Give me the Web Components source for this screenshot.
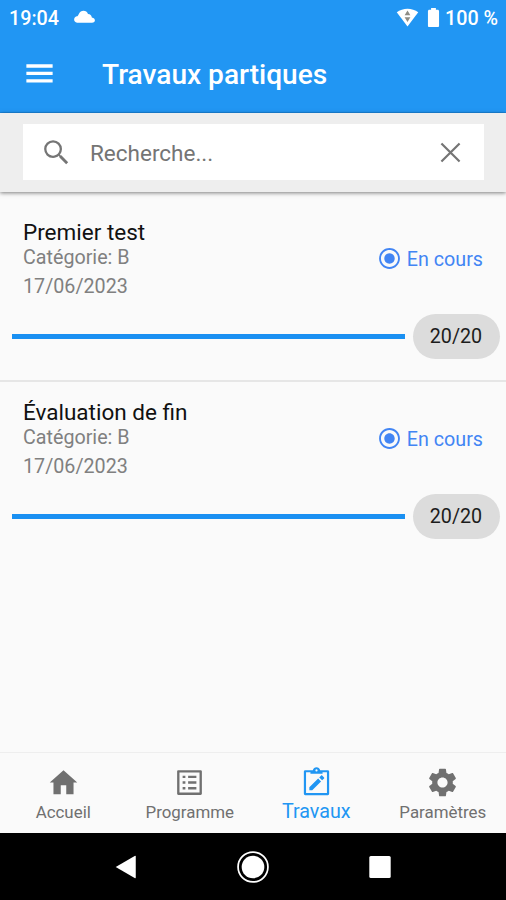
<!DOCTYPE html>
<html lang="fr">
<head>
<meta charset="utf-8">
<meta name="viewport" content="width=device-width, initial-scale=1">
<title>Travaux partiques</title>
<style>
    html, body {
        margin: 0;
        height: 100%;
        overflow: hidden;
        background: #fafafa;
        font-family: Roboto, "Liberation Sans", sans-serif;
    }
</style>
</head>
<body>
<travaux-app></travaux-app>

<script>
const ICONS = {
    menu: '<path d="M3 18.200h18v-2.300H3zM3 13.100h18v-2.300H3zM3 5.700v2.300h18V5.700z"/>',
    search: '<path d="M15.5 14h-.79l-.28-.27A6.471 6.471 0 0 0 16 9.5 6.5 6.5 0 1 0 9.5 16c1.61 0 3.09-.59 4.23-1.57l.27.28v.79l5 4.99L20.49 19l-4.99-5zm-6 .3C6.850 14.300 4.700 12.150 4.700 9.500S6.850 4.700 9.500 4.700 14.300 6.850 14.300 9.500 12.150 14.300 9.500 14.300z"/>',
    close: '<path d="M5.4 5.4l13.2 13.2M18.6 5.4L5.4 18.6" fill="none" stroke="currentColor" stroke-width="1.6"/>',
    radio: '<path d="M12 7c-2.76 0-5 2.24-5 5s2.24 5 5 5 5-2.24 5-5-2.24-5-5-5zm0-5C6.48 2 2 6.48 2 12s4.48 10 10 10 10-4.48 10-10S17.52 2 12 2zm0 18.2c-4.5 0-8.2-3.7-8.2-8.2S7.5 3.8 12 3.8s8.2 3.7 8.2 8.2-3.7 8.2-8.2 8.2z"/>',
    home: '<path d="M10 20.500v-6.500h4v6.500h5.300V12H22L12 3 2 12h2.700v8.500z"/>',
    list: '<path d="M19.3 4.700v14.600H4.700V4.700h14.600m.8-1.700H3.900c-.5 0-.9.4-.9.9v16.2c0 .4.4.9.9.9h16.2c.4 0 .9-.5.9-.9V3.900c0-.5-.5-.9-.9-.9zM11 7h6v1.800h-6V7zm0 4.100h6v1.800h-6zm0 4.100h6V17h-6zM7 7h2v1.800H7zm0 4.100h2v1.800H7zm0 4.100h2V17H7z"/>',
    work: '<path fill-rule="evenodd" d="M20.200 3h-5.500C14.300 1.700 13.300.9 12 .9s-2.300.8-2.700 2.100H3.800a1 1 0 0 0-1 1V20.200a1 1 0 0 0 1 1h16.400a1 1 0 0 0 1-1V4a1 1 0 0 0-1-1zm-8.200-.6a.8.8 0 1 1 0 1.600.8.8 0 0 1 0-1.600zM19.600 19.600H4.400V4.600h3.200v1.100h8.800V4.600h3.200z"/><path d="M6.800 15.500v2.100h2.100l6.400-6.400-2.100-2.100zM17.500 9c.2-.2.200-.5 0-.7l-1.400-1.400c-.2-.2-.5-.2-.7 0l-1.400 1.400 2.100 2.100z"/>',
    gear: '<path d="M19.43 12.98c.04-.32.07-.64.07-.98s-.03-.66-.07-.98l2.11-1.65c.19-.15.24-.42.12-.64l-2-3.46c-.12-.22-.39-.3-.61-.22l-2.49 1c-.52-.4-1.08-.73-1.69-.98l-.38-2.65A.488.488 0 0 0 14 2h-4c-.25 0-.46.18-.49.42l-.38 2.65c-.61.25-1.17.59-1.69.98l-2.49-1c-.23-.09-.49 0-.61.22l-2 3.46c-.13.22-.07.49.12.64l2.11 1.65c-.04.32-.07.65-.07.98s.03.66.07.98l-2.11 1.65c-.19.15-.24.42-.12.64l2 3.46c.12.22.39.3.61.22l2.49-1c.52.4 1.08.73 1.69.98l.38 2.65c.03.24.24.42.49.42h4c.25 0 .46-.18.49-.42l.38-2.65c.61-.25 1.17-.59 1.69-.98l2.49 1c.23.09.49 0 .61-.22l2-3.46c.12-.22.07-.49-.12-.64l-2.11-1.65zM12 15.7c-2 0-3.7-1.67-3.7-3.7s1.67-3.7 3.7-3.7 3.7 1.67 3.7 3.7-1.67 3.7-3.7 3.7z"/>',
    cloud: '<path d="M3.500 19C-.8 19-1 12.500 3.200 11.800c1 0 1.500-1.200 2.300-2.700C6.800 6.500 8.500 5.400 10.800 5.400c2.600 0 4.200 1.100 5.200 3.600 2.600.1 4 1.600 4.400 4 4.600.6 4.700 6 .1 6z"/>',
    wifi: '<path d="M.8 6.500C7 1.600 17 1.600 23.200 6.500L12 21.500z"/><path d="M12 4.600l3 5H9zM12 16.800l3-5H9z" fill="#8d8d86"/>',
    battery: '<path d="M16.200 4H14.500V2h-5v2H7.800C6.700 4 6.200 4.700 6.200 5.500v15c0 .8.500 1.500 1.300 1.500h9c.8 0 1.300-.7 1.300-1.500v-15c0-.8-.5-1.500-1.600-1.500z"/>',
    back: '<path d="M2.500 12L20 1.800q1-.5 1 .6v19.200q0 1.100-1 .6z"/>',
    circle: '<circle cx="12" cy="12" r="11.200" fill="none" stroke="currentColor" stroke-width="1.300"/><circle cx="12" cy="12" r="8.500"/>',
    square: '<rect x="1.300" y="1" width="21.400" height="22" rx="1.500"/>',
};

class AppIcon extends HTMLElement {
    constructor() {
        super();
        this.attachShadow({ mode: 'open' });
    }

    connectedCallback() {
        const size = this.getAttribute('size') || 24;
        this.shadowRoot.innerHTML = `
            <style>
                :host { display: block; flex: none; width: ${size}px; height: ${size}px; }
                svg { display: block; width: 100%; height: 100%; fill: currentColor; }
            </style>
            <svg viewBox="0 0 24 24">${ICONS[this.getAttribute('name')]}</svg>
        `;
    }
}

class StatusBar extends HTMLElement {
    constructor() {
        super();
        this.attachShadow({ mode: 'open' }).innerHTML = `
            <style>
                :host {
                    display: flex;
                    align-items: center;
                    height: 37px;
                    padding: 0 8px 0 9px;
                    box-sizing: border-box;
                    background: #2196f3;
                    color: #fff;
                    font-size: 19.7px;
                    font-weight: 500;
                }
                .cloud { margin: -4px auto 0 15px; }
                .battery { margin: -2px 0 0 3px; }
                .wifi { margin-top: -2px; }
            </style>
            <span>19:04</span>
            <app-icon class="cloud" name="cloud" size="21"></app-icon>
            <app-icon class="wifi" name="wifi" size="23"></app-icon>
            <app-icon class="battery" name="battery" size="23"></app-icon>
            <span>100 %</span>
        `;
    }
}

class TopBar extends HTMLElement {
    constructor() {
        super();
        this.attachShadow({ mode: 'open' }).innerHTML = `
            <style>
                :host {
                    display: flex;
                    align-items: center;
                    gap: 45px;
                    height: 76px;
                    padding-left: 22px;
                    box-sizing: border-box;
                    border-bottom: 1px solid #1a87e0;
                    background: #2196f3;
                    color: #fff;
                }
                app-icon { margin-top: -2px; }
                h1 { margin: 0; font-size: 28.1px; font-weight: 500; line-height: 36px; }
            </style>
            <app-icon name="menu" size="35"></app-icon>
            <h1><slot></slot></h1>
        `;
    }
}

class SearchBar extends HTMLElement {
    constructor() {
        super();
        this.attachShadow({ mode: 'open' }).innerHTML = `
            <style>
                :host {
                    display: block;
                    height: 79px;
                    padding: 11px 22px 12px 23px;
                    box-sizing: border-box;
                    background: #eee;
                    box-shadow: 0 1px 4px rgba(0, 0, 0, .5);
                }
                .field {
                    display: flex;
                    align-items: center;
                    height: 56px;
                    padding: 0 17px;
                    box-sizing: border-box;
                    background: #fff;
                    color: #757575;
                }
                .text { flex: 1; margin: 2px 0 0 17px; font-size: 22.5px; }
            </style>
            <div class="field">
                <app-icon name="search" size="33"></app-icon>
                <span class="text"><slot></slot></span>
                <app-icon name="close" size="33"></app-icon>
            </div>
        `;
    }
}

class WorkItem extends HTMLElement {
    constructor() {
        super();
        this.attachShadow({ mode: 'open' });
    }

    connectedCallback() {
        this.shadowRoot.innerHTML = `
            <style>
                :host {
                    display: block;
                    height: 180px;
                    padding-top: 16px;
                    box-sizing: border-box;
                    border-bottom: 2px solid var(--divider, transparent);
                }
                .info {
                    display: flex;
                    justify-content: space-between;
                    align-items: center;
                    padding: 0 23px;
                }
                .name { font-size: 22.5px; line-height: 28px; color: #111; }
                .meta { font-size: 19.7px; line-height: 24px; color: #808080; }
                .date { margin-top: 5px; }
                .status {
                    display: flex;
                    align-items: center;
                    gap: 5px;
                    margin-top: -1px;
                    font-size: 19.7px;
                    line-height: 26px;
                    color: #4285f4;
                }
                .status span { margin-top: 3px; }
                .score {
                    display: flex;
                    align-items: center;
                    gap: 8px;
                    margin-top: 15px;
                    padding: 0 6px 0 12px;
                }
                .bar { flex: 1; height: 5px; background: #1a90f2; }
                .chip {
                    width: 87px;
                    height: 45px;
                    padding-right: 1px;
                    box-sizing: border-box;
                    border-radius: 23px;
                    background: #dcdcdc;
                    color: #1c1c1c;
                    font-size: 19.7px;
                    line-height: 46px;
                    text-align: center;
                }
            </style>
            <div class="info">
                <div>
                    <div class="name"><slot></slot></div>
                    <div class="meta">Catégorie: ${this.getAttribute('category')}</div>
                    <div class="meta date">${this.getAttribute('date')}</div>
                </div>
                <div class="status">
                    <app-icon name="radio" size="25"></app-icon>
                    <span>${this.getAttribute('status')}</span>
                </div>
            </div>
            <div class="score">
                <div class="bar"></div>
                <div class="chip">${this.getAttribute('score')}</div>
            </div>
        `;
    }
}

class NavTab extends HTMLElement {
    constructor() {
        super();
        this.attachShadow({ mode: 'open' });
    }

    connectedCallback() {
        this.shadowRoot.innerHTML = `
            <style>
                :host {
                    display: flex;
                    flex: 1 1 0;
                    flex-direction: column;
                    align-items: center;
                    padding-top: 12.5px;
                    color: #707070;
                    font-size: 16.9px;
                }
                :host([active]) { color: #2196f3; font-size: 19.7px; }
                span { line-height: 24px; margin-top: 1.5px; }
            </style>
            <app-icon name="${this.getAttribute('icon')}" size="33"></app-icon>
            <span><slot></slot></span>
        `;
    }
}

class BottomNav extends HTMLElement {
    constructor() {
        super();
        this.attachShadow({ mode: 'open' }).innerHTML = `
            <style>
                :host {
                    display: flex;
                    height: 81px;
                    box-sizing: border-box;
                    border-top: 1px solid #eee;
                }
            </style>
            <slot></slot>
        `;
    }
}

class SystemNav extends HTMLElement {
    constructor() {
        super();
        this.attachShadow({ mode: 'open' }).innerHTML = `
            <style>
                :host {
                    display: grid;
                    grid-template-columns: repeat(3, 127px);
                    justify-content: center;
                    justify-items: center;
                    align-items: center;
                    height: 67px;
                    background: #000;
                    color: #fff;
                }
            </style>
            <app-icon name="back" size="26"></app-icon>
            <app-icon name="circle" size="32"></app-icon>
            <app-icon name="square" size="24"></app-icon>
        `;
    }
}

class TravauxApp extends HTMLElement {
    constructor() {
        super();
        this.attachShadow({ mode: 'open' }).innerHTML = `
            <style>
                :host { display: flex; flex-direction: column; height: 100vh; background: #fafafa; }
                main { flex: 1; padding-top: 10px; }
                work-item:first-child { --divider: #e6e6e6; }
            </style>
            <status-bar></status-bar>
            <top-bar>Travaux partiques</top-bar>
            <search-bar>Recherche...</search-bar>
            <main>
                <work-item category="B" date="17/06/2023" status="En cours" score="20/20">Premier test</work-item>
                <work-item category="B" date="17/06/2023" status="En cours" score="20/20">Évaluation de fin</work-item>
            </main>
            <bottom-nav>
                <nav-tab icon="home">Accueil</nav-tab>
                <nav-tab icon="list">Programme</nav-tab>
                <nav-tab icon="work" active>Travaux</nav-tab>
                <nav-tab icon="gear">Paramètres</nav-tab>
            </bottom-nav>
            <system-nav></system-nav>
        `;
    }
}

customElements.define('app-icon', AppIcon);
customElements.define('status-bar', StatusBar);
customElements.define('top-bar', TopBar);
customElements.define('search-bar', SearchBar);
customElements.define('work-item', WorkItem);
customElements.define('nav-tab', NavTab);
customElements.define('bottom-nav', BottomNav);
customElements.define('system-nav', SystemNav);
customElements.define('travaux-app', TravauxApp);
</script>
</body>
</html>
